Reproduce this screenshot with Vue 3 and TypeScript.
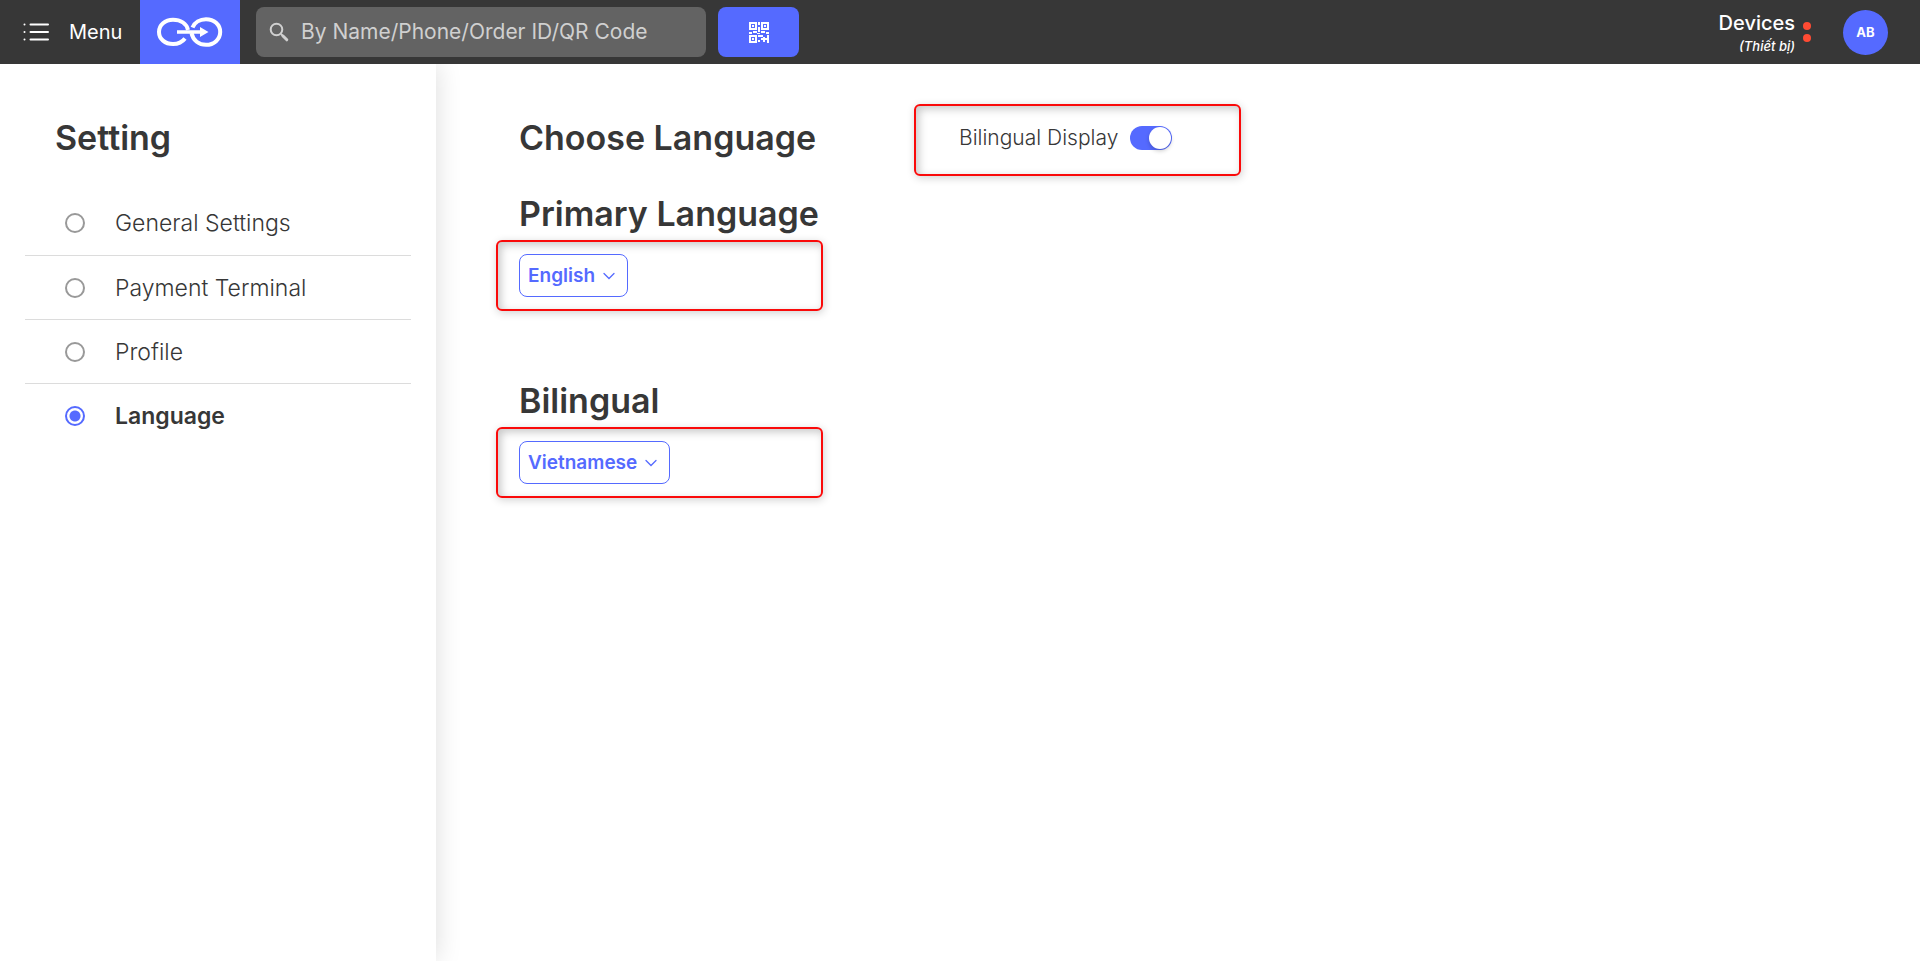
<script setup lang="ts">
import { ref } from 'vue'

interface Section {
  id: string
  label: string
}

const sections: Section[] = [
  { id: 'general', label: 'General Settings' },
  { id: 'payment', label: 'Payment Terminal' },
  { id: 'profile', label: 'Profile' },
  { id: 'language', label: 'Language' },
]
const languages: string[] = ['English', 'Vietnamese']

const current = ref('language')
const query = ref('')
const bilingual = ref(true)
const primary = ref('English')
const secondary = ref('Vietnamese')
</script>

<template>
  <div class="page">
    <header class="topbar">
      <button class="menu" type="button">
        <svg class="menu-icon" viewBox="0 0 26 20" aria-hidden="true">
          <path d="M7.500 2.500H25M7.500 10H25M7.500 17.500H25" />
          <path d="M1.500 2.500h.01M1.500 10h.01M1.500 17.500h.01" />
        </svg>
        <span>Menu</span>
      </button>
      <a class="logo" href="#" aria-label="Home">
        <svg viewBox="0 0 100 64" aria-hidden="true">
          <path class="ring" d="M48 30C46.500 23.500 40.500 19.800 33 19.800C25 19.800 19 25 19 32C19 39 25 44 33 44C38 44 42.300 42 45 38.500" />
          <path class="ring" d="M52.500 27.500C54.500 22.500 60 19.200 66 19.200C74 19.200 80.200 24.700 80.200 32C80.200 39.300 74 44.800 66 44.800C59 44.800 53 40.500 51.500 33" />
          <path class="arrow" d="M37 30.200H60V27L68.500 32L60 37V33.800H37Z" />
        </svg>
      </a>
      <label class="search">
        <svg viewBox="0 0 20 20" aria-hidden="true">
          <circle cx="7.500" cy="7.500" r="5.800" />
          <path d="M12 12L14 14" />
          <path class="handle" d="M14 14L17.800 17.800" />
        </svg>
        <input v-model="query" type="text" aria-label="Search" placeholder="By Name/Phone/Order ID/QR Code" />
      </label>
      <button class="scan" type="button" aria-label="Scan QR code">
        <svg viewBox="0 0 20 21" aria-hidden="true">
          <g class="frame">
            <rect x="1" y="1" width="6" height="6" />
            <rect x="13" y="1" width="6" height="6" />
            <rect x="1" y="14" width="6" height="6" />
          </g>
          <path d="M3 3h2v2h-2zM15 3h2v2h-2zM3 16h2v2h-2zM9 0h2v3h-2zM9 5h2v5h-2zM0 10h3v2h-3zM4 9h4v2h-4zM8 11h3v1h-3zM12 9h4v2h-4zM17 10h3v2h-3zM9 13h5v2h-5zM9 18h2v2h-2zM12 16h8v2h-8zM14 15h2v5h-2zM18 13h2v8h-2z" />
        </svg>
      </button>
      <div class="devices">
        <span class="devices-name">Devices</span>
        <span class="devices-alt">(Thiết bị)</span>
      </div>
      <div class="dots" aria-hidden="true"><i></i><i></i></div>
      <button class="avatar" type="button">AB</button>
    </header>

    <div class="body">
      <aside class="sidebar">
        <h1>Setting</h1>
        <div class="sections" role="radiogroup" aria-label="Setting">
          <label v-for="s in sections" :key="s.id" class="section">
            <input v-model="current" type="radio" name="section" :value="s.id" />
            <span>{{ s.label }}</span>
          </label>
        </div>
      </aside>

      <main class="content">
        <div class="choose">
          <h2>Choose Language</h2>
          <div class="marked toggle-box">
            <label for="bilingual">Bilingual Display</label>
            <input id="bilingual" v-model="bilingual" class="switch" type="checkbox" role="switch" />
          </div>
        </div>

        <h2 class="primary-title"><label for="primary">Primary Language</label></h2>
        <div class="marked">
          <div class="picker">
            <select id="primary" v-model="primary">
              <option v-for="l in languages" :key="l">{{ l }}</option>
            </select>
            <svg viewBox="0 0 12 8" aria-hidden="true"><path d="M1 1.500L6 6.500L11 1.500" /></svg>
          </div>
        </div>

        <h2 class="second-title"><label for="secondary">Bilingual</label></h2>
        <div class="marked">
          <div class="picker">
            <select id="secondary" v-model="secondary">
              <option v-for="l in languages" :key="l">{{ l }}</option>
            </select>
            <svg viewBox="0 0 12 8" aria-hidden="true"><path d="M1 1.500L6 6.500L11 1.500" /></svg>
          </div>
        </div>
      </main>
    </div>
  </div>
</template>

<style>
body {
  margin: 0;
  background: #fff;
}
</style>

<style scoped>
.page {
  min-height: 100vh;
  display: flex;
  flex-direction: column;
  color: #373737;
  font-family: Inter, "Open Sans", sans-serif;
}
.page * {
  box-sizing: border-box;
}
button,
input,
select {
  font-family: inherit;
  margin: 0;
}
button {
  border: 0;
  padding: 0;
  cursor: pointer;
}
svg {
  display: block;
  flex: none;
}

.topbar {
  position: relative;
  z-index: 1;
  height: 64px;
  display: flex;
  align-items: center;
  background: #373737;
  color: #fff;
}
.menu {
  width: 140px;
  padding-left: 23px;
  display: flex;
  align-items: center;
  gap: 20px;
  background: none;
  color: #fff;
  font-size: 20px;
  line-height: 30px;
}
.menu-icon {
  width: 26px;
  height: 20px;
  fill: none;
  stroke: #fff;
  stroke-width: 2;
  stroke-linecap: round;
}
.logo {
  width: 100px;
  height: 64px;
  background: #556aff;
}
.logo svg {
  width: 100px;
  height: 64px;
}
.ring {
  fill: none;
  stroke: #fff;
  stroke-width: 4;
}
.arrow {
  fill: #fff;
}
.search {
  width: 450px;
  height: 50px;
  margin-left: 16px;
  padding: 0 13px;
  display: flex;
  align-items: center;
  gap: 12px;
  border-radius: 8px;
  background: #636363;
}
.search svg {
  width: 20px;
  height: 20px;
  fill: none;
  stroke: #d0d0d0;
  stroke-width: 2;
}
.search .handle {
  stroke-width: 3;
  stroke-linecap: round;
}
.search input {
  flex: 1;
  min-width: 0;
  padding: 0;
  border: 0;
  outline: 0;
  background: none;
  color: #fff;
  font-size: 21px;
  line-height: 30px;
}
.search input::placeholder {
  color: #d0d0d0;
  opacity: 1;
}
.scan {
  width: 81px;
  height: 50px;
  margin-left: 12px;
  display: grid;
  place-items: center;
  border-radius: 8px;
  background: #556aff;
}
.scan svg {
  width: 20px;
  height: 21px;
  fill: #fff;
}
.scan .frame {
  fill: none;
  stroke: #fff;
  stroke-width: 2;
}
.devices {
  margin-left: auto;
  padding-top: 2px;
  display: flex;
  flex-direction: column;
  align-items: flex-end;
}
.devices-name {
  font-size: 20px;
  line-height: 26px;
  font-weight: 500;
}
.devices-alt {
  font-size: 13px;
  line-height: 20px;
  font-weight: 500;
  font-style: italic;
}
.dots {
  margin-left: 8px;
  display: grid;
  gap: 4px;
}
.dots i {
  width: 8px;
  height: 8px;
  border-radius: 50%;
  background: #ff4b33;
}
.avatar {
  width: 45px;
  height: 45px;
  margin: 0 32px;
  border-radius: 50%;
  background: #556aff;
  color: #fff;
  font-size: 13px;
  font-weight: 700;
}

.body {
  flex: 1;
  display: flex;
}
.sidebar {
  width: 436px;
  flex: none;
  padding: 50px 25px 0;
  box-shadow: 0 0 25px rgba(0, 0, 0, 0.14);
}
h1,
h2 {
  margin: 0;
  font-size: 34px;
  line-height: 48px;
  font-weight: 600;
}
h1 {
  padding-left: 30px;
}
.sections {
  margin-top: 29px;
}
.section {
  height: 64px;
  padding-left: 40px;
  display: flex;
  align-items: center;
  gap: 30px;
  font-size: 23px;
  line-height: 32px;
  font-weight: 300;
}
.section + .section {
  border-top: 1px solid #dcdcdc;
}
.section:has(input:checked) {
  font-weight: 600;
}
.section input {
  appearance: none;
  width: 20px;
  height: 20px;
  border: 2px solid #999;
  border-radius: 50%;
}
.section input:checked {
  border-color: #556aff;
  background: radial-gradient(circle, #556aff 5px, transparent 6px);
}

.content {
  flex: 1;
  min-width: 0;
  padding: 40px 60px;
}
.content h2 {
  padding-left: 23px;
}
.choose {
  display: flex;
}
.choose h2 {
  flex: 0 0 418px;
  padding-top: 10px;
}
.content .primary-title {
  margin: 14px 0 2px;
}
.content .second-title {
  margin: 66px 0 2px;
}
.marked {
  width: 327px;
  padding: 12px 21px;
  display: flex;
  border: 2px solid #fa0a0a;
  border-radius: 6px;
  box-shadow: 1px 2px 8px rgba(0, 0, 0, 0.18), inset 3px 3px 8px rgba(0, 0, 0, 0.22);
}
.toggle-box {
  height: 72px;
  padding: 0 43px 4px;
  align-items: center;
  gap: 12px;
  font-size: 21px;
  line-height: 30px;
  font-weight: 300;
}
.switch {
  appearance: none;
  width: 42px;
  height: 24px;
  padding: 1px;
  display: flex;
  border-radius: 12px;
  background: #b5b5b5;
}
.switch::before {
  content: "";
  width: 22px;
  height: 22px;
  border-radius: 50%;
  background: #fff;
  box-shadow: 0 2px 4px rgba(0, 0, 0, 0.2);
}
.switch:checked {
  justify-content: flex-end;
  background: #556aff;
}
.picker {
  height: 43px;
  display: grid;
  align-items: center;
  border: 1px solid #556aff;
  border-radius: 8px;
  color: #556aff;
}
.picker select {
  grid-area: 1 / 1;
  appearance: none;
  field-sizing: content;
  height: 41px;
  padding: 0 32px 0 8px;
  border: 0;
  border-radius: 8px;
  background: none;
  color: inherit;
  font-size: 19px;
  font-weight: 600;
}
.picker svg {
  grid-area: 1 / 1;
  justify-self: end;
  width: 12px;
  height: 8px;
  margin-right: 12px;
  fill: none;
  stroke: #556aff;
  stroke-width: 1.300;
  stroke-linecap: round;
  pointer-events: none;
}
</style>
